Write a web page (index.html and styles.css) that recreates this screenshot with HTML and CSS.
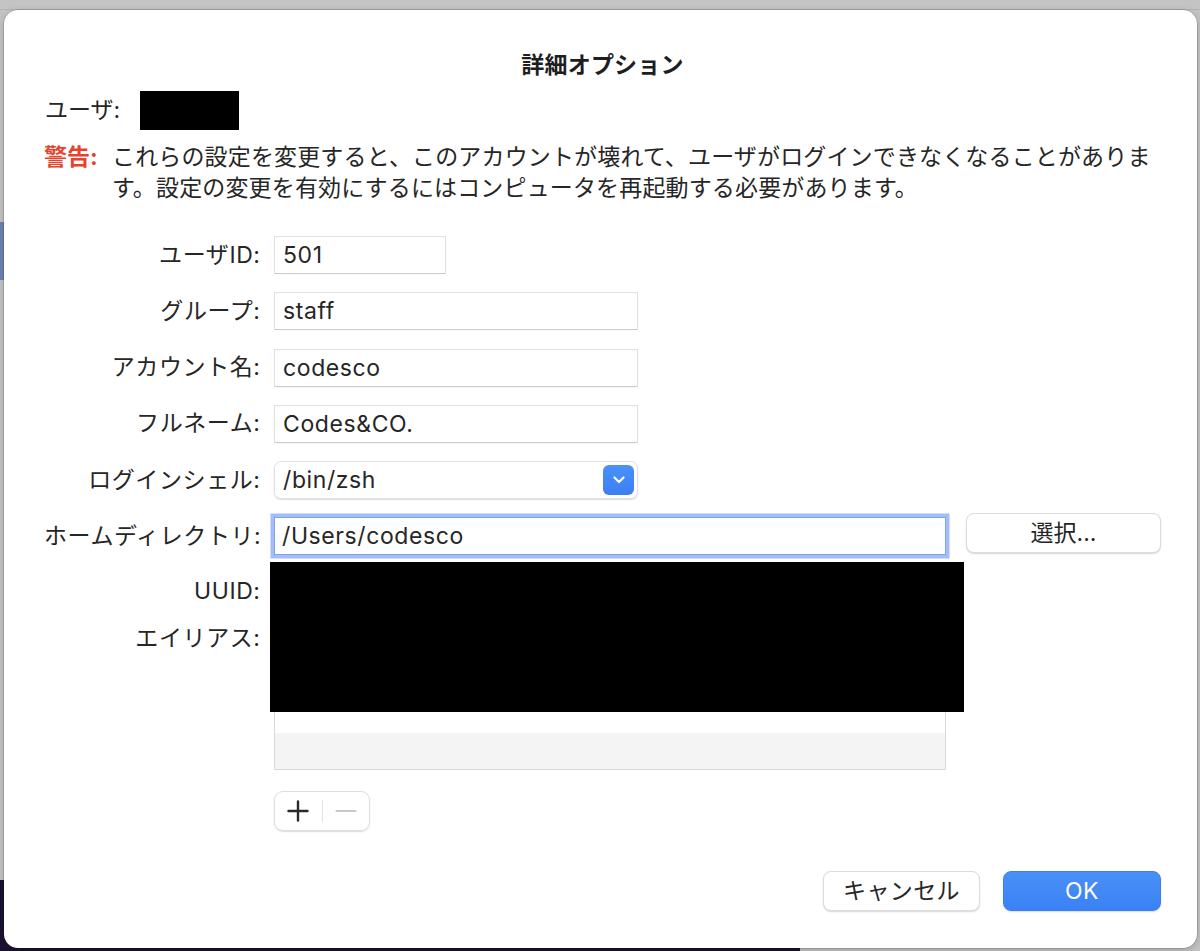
FILE: index.html
```html
<!DOCTYPE html>
<html lang="ja">
<head>
<meta charset="utf-8">
<title>詳細オプション</title>
<link rel="stylesheet" href="styles.css">
</head>
<body>
<div class="dialog">
  <h1 class="title">詳細オプション</h1>

  <div class="user-row">
    <span class="user-label">ユーザ:</span>
    <span class="redact user-redact"></span>
  </div>

  <div class="warning">
    <span class="warning-label">警告:</span>
    <p class="warning-text">これらの設定を変更すると、このアカウントが壊れて、ユーザがログインできなくなることがあります。設定の変更を有効にするにはコンピュータを再起動する必要があります。</p>
  </div>

  <div class="form">
    <span class="label">ユーザID:</span>
    <div class="field field-short">501</div>

    <span class="label">グループ:</span>
    <div class="field field-mid">staff</div>

    <span class="label">アカウント名:</span>
    <div class="field field-mid">codesco</div>

    <span class="label">フルネーム:</span>
    <div class="field field-mid">Codes&amp;CO.</div>

    <span class="label">ログインシェル:</span>
    <div class="popup">
      <span class="popup-text">/bin/zsh</span>
      <span class="popup-btn">
        <svg width="12" height="8" viewBox="0 0 12 8"><path d="M1.5 1.5 L6 6 L10.5 1.5" fill="none" stroke="#fff" stroke-width="2.2" stroke-linecap="round" stroke-linejoin="round"/></svg>
      </span>
    </div>

    <span class="label">ホームディレクトリ:</span>
    <div class="home-row">
      <div class="field field-focus">/Users/codesco</div>
      <button class="btn btn-choose">選択...</button>
    </div>

    <span class="label">UUID:</span>
    <div class="uuid-value"></div>

    <span class="label label-top">エイリアス:</span>
    <div class="alias-cell">
      <div class="alias-table">
        <div class="alias-row alias-row-fill"></div>
        <div class="alias-row alias-row-alt"></div>
        <div class="alias-row"></div>
        <div class="alias-row alias-row-alt"></div>
      </div>
      <div class="segmented">
        <span class="seg seg-add">
          <svg width="22" height="22" viewBox="0 0 22 22"><path d="M11 1.5 V20.5 M1.5 11 H20.5" stroke="#2a2a2a" stroke-width="2.4" stroke-linecap="round"/></svg>
        </span>
        <span class="seg-divider"></span>
        <span class="seg seg-remove">
          <svg width="22" height="22" viewBox="0 0 22 22"><path d="M1.5 11 H20.5" stroke="#c9c9c9" stroke-width="2.2" stroke-linecap="round"/></svg>
        </span>
      </div>
    </div>

    <div class="redact form-redact"></div>
  </div>

  <div class="footer">
    <button class="btn btn-footer">キャンセル</button>
    <button class="btn btn-footer btn-primary">OK</button>
  </div>
</div>
</body>
</html>
```

FILE: styles.css
```css
* {
  box-sizing: border-box;
}

html, body {
  margin: 0;
  padding: 0;
}

body {
  width: 1200px;
  height: 951px;
  overflow: hidden;
  font-family: Inter, "Noto Sans CJK JP", sans-serif;
  font-size: 23px;
  color: #262626;
  background:
    linear-gradient(#1b1232, #1b1232) 0 880px / 800px 71px no-repeat,
    linear-gradient(#7083b3, #7083b3) 0 222px / 4px 58px no-repeat,
    linear-gradient(#b3b3b3, #b3b3b3) 0 9px / 1200px 1px no-repeat,
    #c4c4c4;
  padding-top: 10px;
}

.dialog {
  margin: 0 3px 0 4px;
  height: 938px;
  background: #ffffff;
  border-radius: 14px;
  box-shadow: 0 0 0 0.5px rgba(0, 0, 0, 0.25), 0 3px 10px rgba(0, 0, 0, 0.18);
  padding: 40px 36px 37px 40px;
  display: flex;
  flex-direction: column;
}

.title {
  margin: 0;
  font-size: 23px;
  font-weight: 700;
  line-height: 31px;
  text-align: center;
  color: #1e1e1e;
  letter-spacing: 0.2px;
}

.user-row {
  margin-top: 10px;
  display: flex;
  align-items: center;
  height: 39px;
}

.user-label {
  width: 96px;
  padding-left: 1px;
  line-height: 31px;
}

.redact {
  background: #000;
}

.user-redact {
  width: 99px;
  height: 39px;
}

.warning {
  margin-top: 12px;
  display: flex;
  line-height: 31px;
}

.warning-label {
  width: 68px;
  flex: none;
  font-weight: 700;
  color: #e5432d;
}

.warning-text {
  margin: 0;
  flex: 1;
  letter-spacing: 0.15px;
}

.form {
  position: relative;
  margin-top: 32px;
  display: grid;
  grid-template-columns: 216px 1fr;
  grid-template-rows: 38px 38px 38px 38px 38px 38px 36px auto;
  column-gap: 14px;
  row-gap: 18.25px;
}

.label {
  align-self: center;
  text-align: right;
  line-height: 31px;
  white-space: nowrap;
  letter-spacing: 0.6px;
  margin-right: -0.6px;
}

.label-top {
  align-self: start;
  line-height: 21px;
}

.field {
  height: 38px;
  line-height: 36px;
  padding-left: 8px;
  background: #fff;
  border: 1px solid #e1e1e1;
  border-bottom-color: #cdcdcd;
  box-shadow: 0 0.5px 0 rgba(0, 0, 0, 0.06);
  white-space: nowrap;
  letter-spacing: 0.6px;
}

.field-short {
  width: 172px;
}

.field-mid {
  width: 364px;
}

.popup {
  width: 364px;
  height: 38px;
  border: 1px solid #e0e0e0;
  border-radius: 7px;
  box-shadow: 0 1px 1.5px rgba(0, 0, 0, 0.14);
  display: flex;
  align-items: center;
  justify-content: space-between;
  padding: 0 3px 0 8px;
}

.popup-text {
  line-height: 31px;
  letter-spacing: 0.6px;
}

.popup-btn {
  width: 31px;
  height: 30px;
  border-radius: 6px;
  background: linear-gradient(#4b91f8, #3a80f4);
  display: flex;
  align-items: center;
  justify-content: center;
}

.home-row {
  display: flex;
  align-items: flex-start;
}

.field-focus {
  width: 672px;
  padding-left: 7px;
  border: 1px solid #7ea3ef;
  box-shadow: 0 0 0 3.5px #a2bdf7;
}

.btn {
  height: 40px;
  padding: 0;
  font-family: inherit;
  font-size: 23px;
  color: #262626;
  background: #fff;
  border: 1px solid #dcdcdc;
  border-radius: 8px;
  box-shadow: 0 1px 1.5px rgba(0, 0, 0, 0.16);
  line-height: 38px;
}

.btn-choose {
  width: 195px;
  margin-left: 20px;
  margin-top: -4px;
}

.uuid-value {
  height: 36px;
}

.alias-cell {
  display: flex;
  flex-direction: column;
  align-items: flex-start;
}

.alias-table {
  width: 672px;
  height: 142.5px;
  border: 1px solid #d9d9d9;
  display: flex;
  flex-direction: column;
}

.alias-row {
  height: 36px;
  background: #fff;
}

.alias-row-fill {
  flex: 1;
}

.alias-row-alt {
  background: #f4f4f4;
}

.segmented {
  margin-top: 21px;
  width: 96px;
  height: 40px;
  border: 1px solid #dedede;
  border-radius: 9px;
  box-shadow: 0 1px 1.5px rgba(0, 0, 0, 0.14);
  display: flex;
  align-items: center;
}

.seg {
  flex: 1;
  height: 100%;
  display: flex;
  align-items: center;
  justify-content: center;
}

.seg-divider {
  width: 1px;
  height: 22px;
  background: #e2e2e2;
}

.form-redact {
  position: absolute;
  left: 226px;
  top: 326px;
  width: 694px;
  height: 150px;
}

.footer {
  margin-top: auto;
  display: flex;
  justify-content: flex-end;
  gap: 23px;
}

.btn-footer {
  width: 157px;
  letter-spacing: 0.4px;
}

.btn-primary {
  width: 158px;
  color: #fff;
  border-color: #3a80f4;
  background: linear-gradient(#4a90f8, #3a81f5);
  box-shadow: 0 1px 1.5px rgba(0, 0, 0, 0.14);
}
```
